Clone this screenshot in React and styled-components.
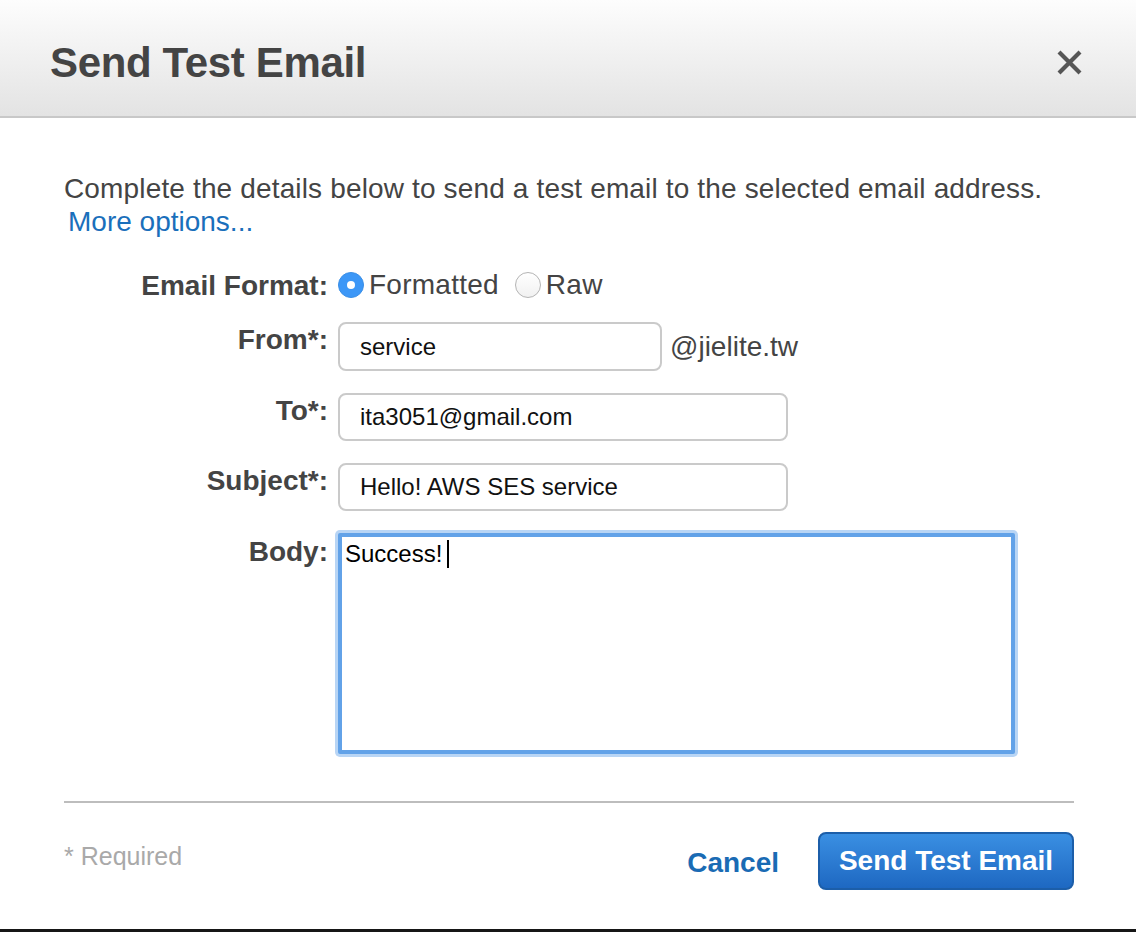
import React from "react";
import styled, { createGlobalStyle } from "styled-components";

const GlobalStyle = createGlobalStyle`
  html, body {
    margin: 0;
    padding: 0;
    background: #161616;
  }
  body {
    font-family: "Liberation Sans", Arial, sans-serif;
  }
`;

const Dialog = styled.div`
  width: 1136px;
  height: 929px;
  background: #fff;
  display: flex;
  flex-direction: column;
`;

const Header = styled.header`
  box-sizing: border-box;
  height: 118px;
  border-bottom: 2px solid #c8c8c8;
  background: linear-gradient(#fdfdfd, #e3e3e3);
  display: flex;
  align-items: center;
  justify-content: space-between;
  padding: 9px 52px 0 50px;
`;

const Title = styled.h1`
  margin: 0;
  font-size: 42px;
  font-weight: bold;
  color: #444;
  letter-spacing: -0.35px;
`;

const Close = styled.button`
  border: 0;
  background: none;
  padding: 0;
  width: 30px;
  height: 30px;
  display: flex;
  align-items: center;
  justify-content: center;
  cursor: pointer;
`;

const Body = styled.div`
  padding: 54px 62px 0 64px;
  color: #444;
`;

const Intro = styled.p`
  margin: 0;
  font-size: 28px;
  line-height: 33px;
  letter-spacing: 0.15px;
`;

const MoreLink = styled.a`
  display: block;
  padding-left: 4px;
  font-size: 28px;
  line-height: 33px;
  color: #1a6fbb;
  text-decoration: none;
`;

const Form = styled.div`
  margin-top: 31px;
  display: grid;
  grid-template-columns: 264px 1fr;
  column-gap: 10px;
  row-gap: 22px;
  align-items: start;
`;

const Label = styled.label`
  text-align: right;
  font-size: 28px;
  font-weight: bold;
  line-height: 34px;
  color: #444;
  padding-top: ${({ $offset }) => $offset || 0}px;
  height: ${({ $short }) => ($short ? "31px" : "auto")};
`;

const Control = styled.div`
  display: flex;
  align-items: center;
  font-size: 28px;
  line-height: 34px;
  letter-spacing: 0.25px;
  color: #444;
  height: ${({ $short }) => ($short ? "31px" : "auto")};
`;

const RadioOption = styled.span`
  display: inline-flex;
  align-items: center;
  margin-right: ${({ $gap }) => $gap || 0}px;
`;

const Radio = styled.span`
  width: 26px;
  height: 26px;
  box-sizing: border-box;
  border-radius: 50%;
  margin-right: 5px;
  display: inline-flex;
  align-items: center;
  justify-content: center;
  background: ${({ $checked }) =>
    $checked ? "#3c97f7" : "linear-gradient(#fff, #f1f1f1)"};
  border: 1px solid ${({ $checked }) => ($checked ? "#3a8ee6" : "#b4b4b4")};

  &::after {
    content: "";
    display: ${({ $checked }) => ($checked ? "block" : "none")};
    width: 8px;
    height: 8px;
    border-radius: 50%;
    background: #fff;
  }
`;

const Input = styled.input`
  box-sizing: border-box;
  width: ${({ $width }) => $width}px;
  height: ${({ $tall }) => ($tall ? 49 : 48)}px;
  border: 2px solid #cacaca;
  border-radius: 8px;
  padding: 0 20px;
  font-family: "Liberation Sans", Arial, sans-serif;
  font-size: 24px;
  color: #111;
  background: #fff;
  outline: none;
`;

const Suffix = styled.span`
  margin-left: 8px;
  font-size: 28px;
  letter-spacing: 0;
  color: #444;
`;

const TextArea = styled.div`
  box-sizing: border-box;
  width: 677px;
  height: 221px;
  border: 4px solid #62a2e8;
  box-shadow: 0 0 0 3px #b8d5f5;
  border-radius: 2px;
  padding: 3px 0 0 3px;
  font-size: 24px;
  line-height: 28px;
  letter-spacing: 0;
  color: #000;
  background: #fff;
`;

const Caret = styled.span`
  display: inline-block;
  width: 2px;
  height: 28px;
  margin-left: 5px;
  background: #000;
  vertical-align: top;
`;

const Divider = styled.hr`
  margin: 47px 62px 0 64px;
  border: 0;
  border-top: 2px solid #bdbdbd;
`;

const Footer = styled.footer`
  display: flex;
  align-items: center;
  padding: 29px 62px 0 64px;
`;

const Required = styled.span`
  font-size: 25px;
  color: #a9a9a9;
  margin-bottom: 10px;
`;

const Spacer = styled.div`
  flex: 1;
`;

const CancelLink = styled.a`
  font-size: 28px;
  font-weight: bold;
  color: #1a6bb4;
  margin: 4px 39px 0 0;
  text-decoration: none;
  cursor: pointer;
`;

const PrimaryButton = styled.button`
  box-sizing: border-box;
  width: 256px;
  height: 58px;
  border: 2px solid #1c5ea9;
  border-radius: 8px;
  background: linear-gradient(#3a8fe2, #1e68c2);
  color: #fff;
  font-family: "Liberation Sans", Arial, sans-serif;
  font-size: 28px;
  font-weight: bold;
  cursor: pointer;
  padding: 0;
`;

const CloseIcon = () => (
  <svg width="27" height="27" viewBox="0 0 27 27">
    <path
      d="M3 3 L24 24 M24 3 L3 24"
      stroke="#555"
      strokeWidth="4.2"
      strokeLinecap="butt"
    />
  </svg>
);

const App = () => {
  return (
    <>
      <GlobalStyle />
      <Dialog>
        <Header>
          <Title>Send Test Email</Title>
          <Close aria-label="Close">
            <CloseIcon />
          </Close>
        </Header>
        <Body>
          <Intro>
            Complete the details below to send a test email to the selected email address.
          </Intro>
          <MoreLink href="#">More options...</MoreLink>
          <Form>
            <Label $short>Email Format:</Label>
            <Control $short>
              <RadioOption $gap={16}>
                <Radio $checked />
                Formatted
              </RadioOption>
              <RadioOption>
                <Radio />
                Raw
              </RadioOption>
            </Control>

            <Label $offset={1}>From*:</Label>
            <Control>
              <Input $width={324} $tall defaultValue="service" readOnly />
              <Suffix>@jielite.tw</Suffix>
            </Control>

            <Label $offset={1}>To*:</Label>
            <Control>
              <Input $width={450} defaultValue="ita3051@gmail.com" readOnly />
            </Control>

            <Label $offset={1}>Subject*:</Label>
            <Control>
              <Input $width={450} defaultValue="Hello! AWS SES service" readOnly />
            </Control>

            <Label $offset={2}>Body:</Label>
            <Control>
              <TextArea>
                Success!
                <Caret />
              </TextArea>
            </Control>
          </Form>
        </Body>
        <Divider />
        <Footer>
          <Required>* Required</Required>
          <Spacer />
          <CancelLink>Cancel</CancelLink>
          <PrimaryButton>Send Test Email</PrimaryButton>
        </Footer>
      </Dialog>
    </>
  );
};

export default App;
